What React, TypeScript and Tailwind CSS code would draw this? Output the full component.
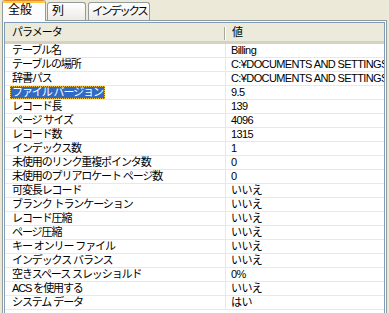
const rows: [string, string][] = [
  ['テーブル名', 'Billing'],
  ['テーブルの場所', 'C:¥DOCUMENTS AND SETTINGS'],
  ['辞書パス', 'C:¥DOCUMENTS AND SETTINGS'],
  ['ファイル バージョン', '9.5'],
  ['レコード長', '139'],
  ['ページ サイズ', '4096'],
  ['レコード数', '1315'],
  ['インデックス数', '1'],
  ['未使用のリンク重複ポインタ数', '0'],
  ['未使用のプリアロケート ページ数', '0'],
  ['可変長レコード', 'いいえ'],
  ['ブランク トランケーション', 'いいえ'],
  ['レコード圧縮', 'いいえ'],
  ['ページ圧縮', 'いいえ'],
  ['キー オンリー ファイル', 'いいえ'],
  ['インデックス バランス', 'いいえ'],
  ['空きスペース スレッショルド', '0%'],
  ['ACS を使用する', 'いいえ'],
  ['システム データ', 'はい'],
]

const font = 'font-["Liberation_Sans","Noto_Sans_CJK_JP",sans-serif]'

export default function App() {
  return (
    <div className={`w-[389px] h-[313px] overflow-hidden bg-[#ECE9D8] text-black ${font}`}>
      {/* tabs */}
      <div className="flex items-end h-[20px] pl-[2px] gap-[1px] whitespace-nowrap">
        <div className="relative z-10 h-[21px] w-[44px] -mb-px bg-[#FCFCFE] border-x border-[#919B9C] rounded-t-[3px] overflow-hidden">
          <div className="h-[1px] bg-[#E68B2C]" />
          <div className="h-[2px] bg-[#FFC73C]" />
          <div className="pl-[5px] text-[12px] leading-[15px]">全般</div>
        </div>
        <div className="h-[18px] w-[39px] border border-b-0 border-[#919B9C] rounded-t-[3px] bg-gradient-to-b from-[#FFFFFF] to-[#ECEBE6] pl-[4px] text-[12px] leading-[17px]">
          列
        </div>
        <div className="ml-[1px] h-[18px] w-[62px] overflow-hidden border border-b-0 border-[#919B9C] rounded-t-[3px] bg-gradient-to-b from-[#FFFFFF] to-[#ECEBE6] pl-[3px] text-[11.5px] leading-[17px] tracking-[-2.4px]">
          インデックス
        </div>
      </div>

      {/* panel */}
      <div className="ml-[2px] w-[385px] h-[300px] border border-b-0 border-[#919B9C] bg-[#FCFCFE] pt-[1px] px-[1px]">
        <div className="h-full border border-b-0 border-[#7F9DB9] bg-white overflow-hidden">
          {/* header */}
          <div className="flex h-[21px] bg-[#EBEADB] border-b-[3px] border-[#D6D2C2] text-[11px]">
            <div className="w-[221px] flex items-center pl-[7px] relative tracking-[-1px]">
              パラメータ
              <div className="absolute right-0 top-[4px] h-[13px] w-[2px] border-l border-[#ACA899] bg-white" />
            </div>
            <div className="flex-1 flex items-center pl-[6px]">値</div>
          </div>

          {/* rows */}
          {rows.map(([k, v], i) => (
            <div key={i} className="flex h-[14px] border-b border-[#EAE8E0] text-[11px] leading-[13px] whitespace-nowrap">
              <div className="w-[221px] border-r border-[#EAE8E0] pl-[5px] overflow-hidden tracking-[-1.1px]">
                {i === 3 ? (
                  <span className="inline-block bg-[#316AC5] text-white px-[2px] outline outline-1 outline-dotted outline-[#F0C040] -outline-offset-1">
                    {k}
                  </span>
                ) : (
                  <span className="pl-[2px]">{k}</span>
                )}
              </div>
              <div className="flex-1 pl-[5px] overflow-hidden tracking-[-0.6px]">{v}</div>
            </div>
          ))}
        </div>
      </div>
    </div>
  )
}
